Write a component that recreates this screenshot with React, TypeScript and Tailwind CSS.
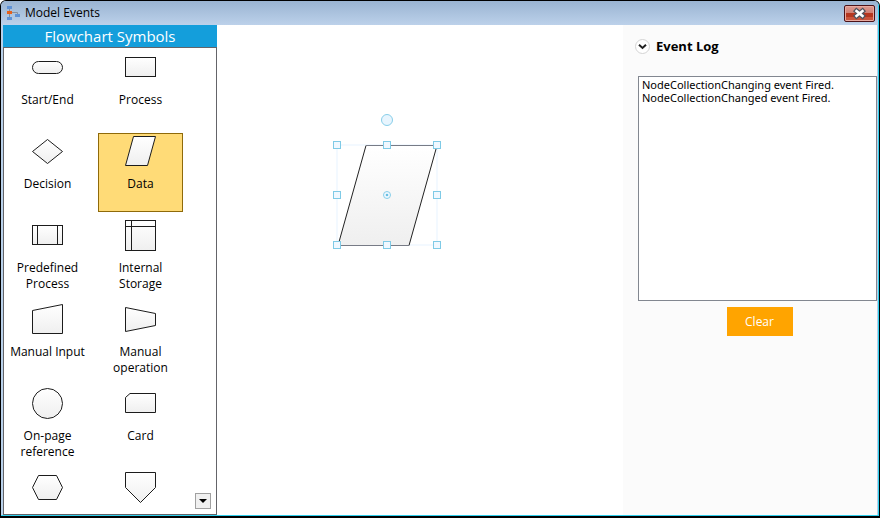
import { useState, type ReactNode } from "react";

type Item = { name: string; label: string; shape: ReactNode };

const items: Item[] = [
  { name: "Start/End", label: "Start/End", shape: <rect x="1.5" y="10.5" width="30" height="12" rx="6" /> },
  { name: "Process", label: "Process", shape: <rect x="1.5" y="6.5" width="30" height="19" /> },
  { name: "Decision", label: "Decision", shape: <polygon points="1.5,16.5 16.5,4.5 31.5,16.5 16.5,28.5" /> },
  { name: "Data", label: "Data", shape: <polygon points="1.5,30.5 9.5,1.5 31.5,1.5 23.5,30.5" /> },
  {
    name: "Predefined Process",
    label: "Predefined Process",
    shape: (
      <>
        <rect x="1.5" y="6.5" width="30" height="19" />
        <path d="M6.5 6.5v19M26.5 6.5v19" />
      </>
    ),
  },
  {
    name: "Internal Storage",
    label: "Internal Storage",
    shape: (
      <>
        <rect x="1.5" y="1.5" width="30" height="30" />
        <path d="M1.5 7.5h30M7.5 1.5v30" />
      </>
    ),
  },
  { name: "Manual Input", label: "Manual Input", shape: <polygon points="1.5,7.5 31.5,1.5 31.5,30.5 1.5,30.5" /> },
  { name: "Manual operation", label: "Manual operation", shape: <polygon points="1.5,4.5 31.5,10.5 31.5,22.5 1.5,28.5" /> },
  { name: "On-page reference", label: "On-page reference", shape: <circle cx="16.5" cy="16.5" r="15" /> },
  { name: "Card", label: "Card", shape: <polygon points="1.5,10.5 6,6.5 31.5,6.5 31.5,25.5 1.5,25.5" /> },
  { name: "Preparation", label: "", shape: <polygon points="1.5,16.5 7.5,4.5 25.5,4.5 31.5,16.5 25.5,28.5 7.5,28.5" /> },
  { name: "Off-page reference", label: "", shape: <polygon points="1.5,1.5 31.5,1.5 31.5,16.5 16.5,31.5 1.5,16.5" /> },
];

const handles = [
  [7, 35], [57, 35], [107, 35],
  [7, 85], [107, 85],
  [7, 135], [57, 135], [107, 135],
];

function TitleBar() {
  return (
    <header className="flex h-6 shrink-0 items-center bg-linear-to-b from-[#9ab4d2] to-[#bcd1ea] pl-1">
      <svg width="16" height="16" viewBox="0 0 16 16" aria-hidden="true">
        <path d="M4.500 2v11M5 7.500h7.500v2" fill="none" stroke="#8a8f98" />
        <rect x="2" y="1" width="5" height="3" fill="#5f92d6" />
        <rect x="2" y="6" width="5" height="3" fill="#e8601a" />
        <rect x="10" y="9" width="5" height="3" fill="#5f92d6" />
        <rect x="2" y="12" width="5" height="3" fill="#5f92d6" />
      </svg>
      <h1 className="ml-1 flex-1 text-xs text-black">Model Events</h1>
      <button
        aria-label="Close"
        className="mr-[3px] flex h-[17px] w-[31px] items-center justify-center rounded-[2px] border border-[#4b1218] bg-linear-to-b from-[#dc9a92] from-0% via-[#cf7d71] via-50% to-[#d5745c] inset-ring inset-ring-[#e8aaa0]"
      >
        <svg width="29" height="15" viewBox="0 0 29 15" aria-hidden="true">
          <rect x="1" y="7" width="27" height="4" fill="#b5361f" />
          <rect x="1" y="11" width="27" height="3" fill="#c9543c" />
          <path d="M11.500 5l6 5M17.500 5l-6 5" stroke="#50545f" strokeWidth="5" strokeLinecap="square" />
          <path d="M11.500 5l6 5M17.500 5l-6 5" stroke="#fff" strokeWidth="2.500" strokeLinecap="square" />
        </svg>
      </button>
    </header>
  );
}

function Palette() {
  const [selected, setSelected] = useState("Data");
  return (
    <aside className="flex w-[214px] shrink-0 flex-col">
      <h2 className="flex h-[22px] shrink-0 items-center justify-center bg-[#149edb] text-[15px] text-white">
        Flowchart Symbols
      </h2>
      <div className="relative min-h-0 flex-1 overflow-hidden border border-[#646469] bg-white">
        <div className="grid grid-cols-[85px_85px] gap-x-2 gap-y-[5px] pt-px pl-px">
          {items.map((item) => (
            <button
              key={item.name}
              aria-label={item.name}
              aria-pressed={selected === item.name}
              onClick={() => setSelected(item.name)}
              className={
                "flex h-[79px] flex-col items-center border pt-px text-xs leading-4 text-black " +
                (selected === item.name ? "border-[#8f6a0a] bg-[#ffdb77]" : "border-transparent")
              }
            >
              <svg
                width="33"
                height="33"
                viewBox="0 0 33 33"
                fill="url(#shade)"
                stroke="#1c1c1c"
                className="shrink-0"
                aria-hidden="true"
              >
                {item.shape}
              </svg>
              <span className="mt-2 w-20">{item.label}</span>
            </button>
          ))}
        </div>
        <button
          aria-label="Scroll down"
          className="absolute right-[5px] bottom-[5px] flex h-4 w-4 items-center justify-center border border-[#a0a0a0] bg-[#f0f0f0]"
        >
          <svg width="8" height="4" viewBox="0 0 8 4" aria-hidden="true">
            <path d="M0 0h8L4 4z" />
          </svg>
        </button>
      </div>
    </aside>
  );
}

function Diagram() {
  return (
    <main className="relative min-w-0 flex-1 bg-white">
      <svg
        className="absolute top-[85px] left-[113px]"
        width="115"
        height="141"
        viewBox="0 0 115 141"
        role="img"
        aria-label="Selected data node"
      >
        <rect x="7" y="35" width="100" height="100" fill="none" stroke="#f3f9ff" strokeWidth="2" />
        <polygon points="8,135.500 36,35.500 107,35.500 79,135.500" fill="url(#shade)" stroke="#222" />
        <path d="M36 35.500h71M8 135.500h71" stroke="#777b86" />
        <circle cx="57" cy="10" r="5.500" fill="#e8f5fe" stroke="#87cee9" />
        {handles.map(([x, y]) => (
          <rect key={`${x}-${y}`} x={x - 3.5} y={y - 3.5} width="7" height="7" fill="#f0f8ff" stroke="#7fcae6" />
        ))}
        <circle cx="57" cy="85" r="3.500" fill="#f0f8ff" stroke="#87cee9" />
        <circle cx="57" cy="85" r="1.300" fill="#68bfe2" />
      </svg>
    </main>
  );
}

function EventLog() {
  const [log, setLog] = useState(
    "NodeCollectionChanging event Fired.\nNodeCollectionChanged event Fired.",
  );
  return (
    <section className="flex w-[254px] shrink-0 flex-col bg-[#fbfbfb] pt-3 pl-[15px]">
      <div className="flex h-[19px] items-center gap-[6px]">
        <button aria-label="Collapse Event Log" className="-ml-[3px] shrink-0">
          <svg width="15" height="15" viewBox="0 0 15 15" fill="none" aria-hidden="true">
            <circle cx="7.500" cy="7.500" r="7" fill="#fff" stroke="#d3d3d3" />
            <path d="M4 5.700l3.500 3.200L11 5.700" stroke="#222" strokeWidth="2" />
          </svg>
        </button>
        <label htmlFor="log" className="text-[13px] font-bold text-black">
          Event Log
        </label>
      </div>
      <textarea
        id="log"
        readOnly
        value={log}
        className="mt-5 h-[225px] w-full resize-none border border-[#828790] bg-white px-[3px] py-px font-['Noto_Sans',sans-serif] text-[11px] leading-[13px] text-black outline-none"
      />
      <div className="mt-[6px] flex justify-center pl-1">
        <button onClick={() => setLog("")} className="h-[29px] w-[66px] bg-[#ffa400] text-xs text-white">
          Clear
        </button>
      </div>
    </section>
  );
}

export default function App() {
  return (
    <div className="h-screen bg-white font-['Open_Sans','Noto_Sans',sans-serif]">
      <svg width="0" height="0" className="absolute" aria-hidden="true">
        <defs>
          <linearGradient id="shade" x1="0" y1="0" x2="0" y2="1">
            <stop offset="0" stopColor="#fff" />
            <stop offset="1" stopColor="#efefef" />
          </linearGradient>
        </defs>
      </svg>
      <div className="flex h-full flex-col overflow-hidden rounded-t-md border border-b-2 border-black bg-[#b9d1ea]">
        <div className="flex min-h-0 flex-1 flex-col border-r border-b border-[#2fd0ee]">
          <TitleBar />
          <div className="flex min-h-0 flex-1 pr-px pl-[2px]">
            <Palette />
            <Diagram />
            <EventLog />
          </div>
        </div>
      </div>
    </div>
  );
}
